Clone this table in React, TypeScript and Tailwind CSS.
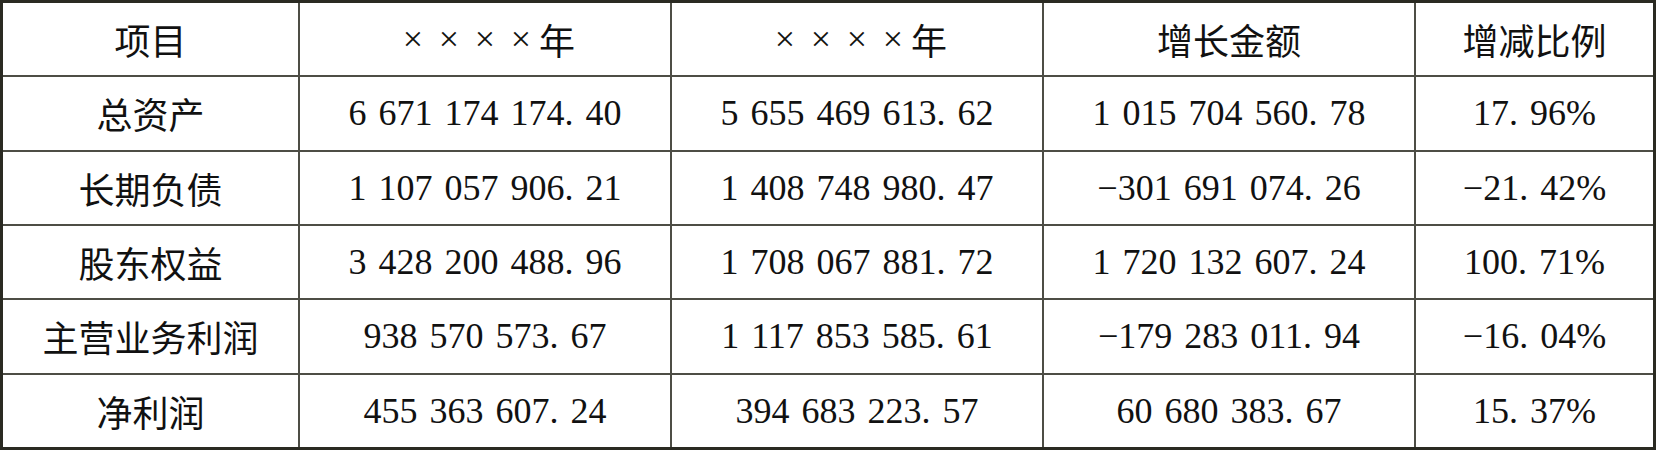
const rows: string[][] = [
  ['总资产', '6 671 174 174. 40', '5 655 469 613. 62', '1 015 704 560. 78', '17. 96%'],
  ['长期负债', '1 107 057 906. 21', '1 408 748 980. 47', '−301 691 074. 26', '−21. 42%'],
  ['股东权益', '3 428 200 488. 96', '1 708 067 881. 72', '1 720 132 607. 24', '100. 71%'],
  ['主营业务利润', '938 570 573. 67', '1 117 853 585. 61', '−179 283 011. 94', '−16. 04%'],
  ['净利润', '455 363 607. 24', '394 683 223. 57', '60 680 383. 67', '15. 37%'],
];

const serif = { fontFamily: '"Liberation Serif", serif' };

function YearLabel() {
  return (
    <div className="flex items-center">
      <div className="w-[36px] text-center" style={serif}>×</div>
      <div className="w-[36px] text-center" style={serif}>×</div>
      <div className="w-[36px] text-center" style={serif}>×</div>
      <div className="w-[36px] text-center" style={serif}>×</div>
      <div className="font-[family-name:Noto_Sans_CJK_SC]">年</div>
    </div>
  );
}

export default function App() {
  return (
    <div className="w-[1656px] h-[450px] bg-white text-[36px] leading-none text-[#111]">
      <div className="w-full h-full border-[3px] border-[#2a2a22] box-border">
        <div className="grid h-full grid-cols-[295px_370px_370px_370px_1fr] grid-rows-6 gap-[2px] bg-[#4d4d45]">
          <div className="bg-white flex items-center justify-center font-[family-name:Noto_Sans_CJK_SC]">项目</div>
          <div className="bg-white flex items-center justify-center"><YearLabel /></div>
          <div className="bg-white flex items-center justify-center"><YearLabel /></div>
          <div className="bg-white flex items-center justify-center font-[family-name:Noto_Sans_CJK_SC]">增长金额</div>
          <div className="bg-white flex items-center justify-center font-[family-name:Noto_Sans_CJK_SC]">增减比例</div>
          {rows.map((row) => (
            <>
              <div key={row[0]} className="bg-white flex items-center justify-center font-[family-name:Noto_Sans_CJK_SC]">
                {row[0]}
              </div>
              {row.slice(1).map((value) => (
                <div key={row[0] + value} className="bg-white flex items-center justify-center [word-spacing:3px]" style={serif}>
                  {value}
                </div>
              ))}
            </>
          ))}
        </div>
      </div>
    </div>
  );
}
